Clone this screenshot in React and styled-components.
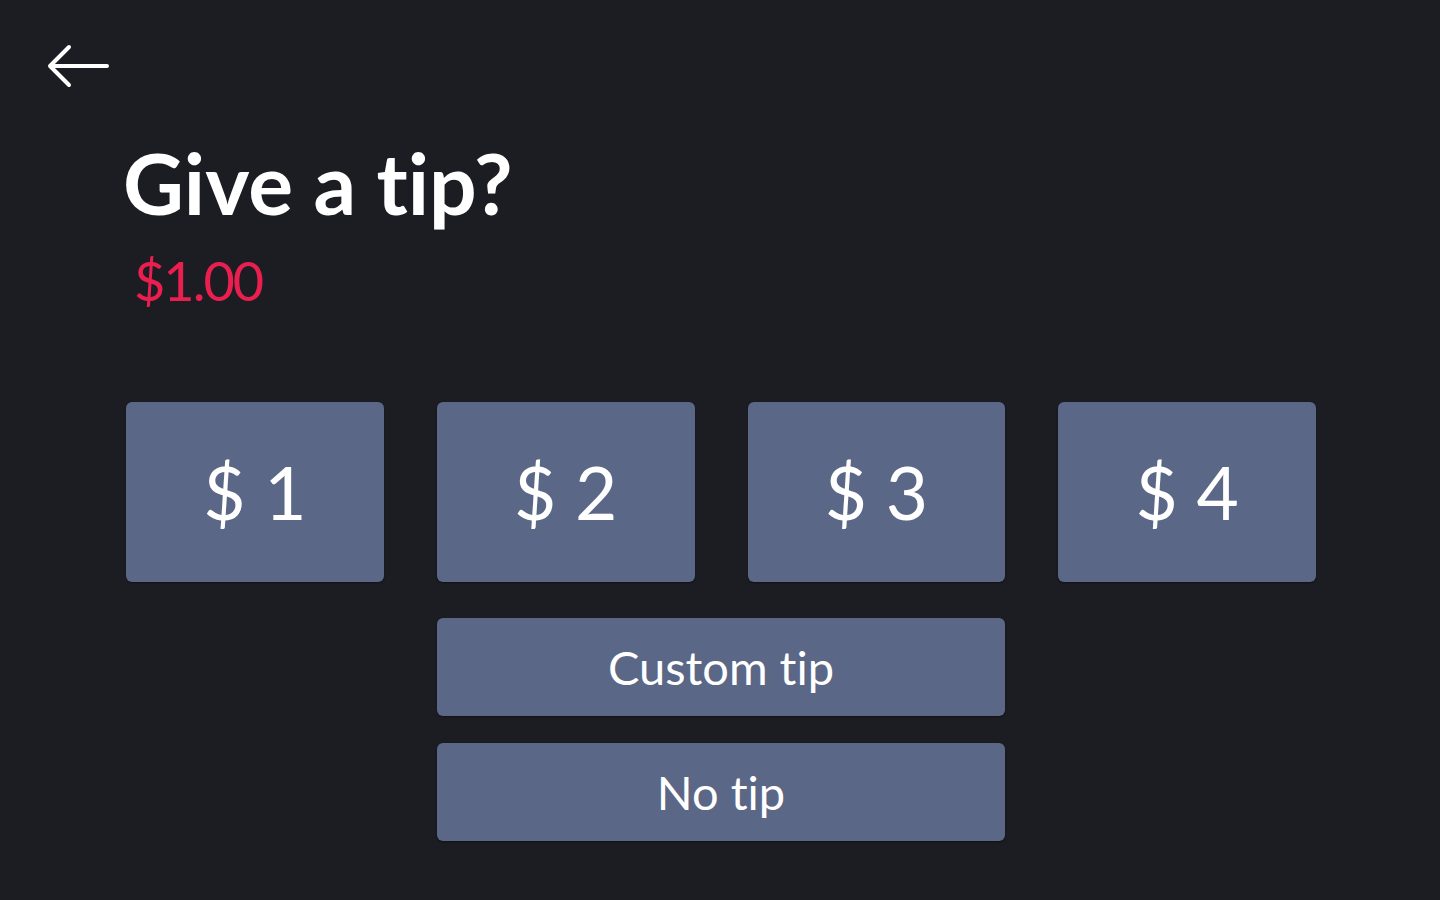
import React from "react";
import styled, { createGlobalStyle } from "styled-components";

const GlobalStyle = createGlobalStyle`
	html, body {
		margin: 0;
		padding: 0;
		background: #1c1d22;
	}
	body {
		font-family: "Lato", "Noto Sans", sans-serif;
		color: #fff;
		font-variant-ligatures: none;
	}
`;

const Page = styled.div`
	width: 1440px;
	height: 900px;
	box-sizing: border-box;
	padding: 44px 124px 0 126px;
	position: relative;
`;

const BackButton = styled.button`
	position: absolute;
	top: 43px;
	left: 46px;
	width: 64px;
	height: 46px;
	padding: 0;
	border: none;
	background: transparent;
	cursor: pointer;
	display: flex;
	align-items: center;
	justify-content: center;
`;

const Header = styled.div`
	padding-top: 91px;
	display: flex;
	flex-direction: column;
`;

const Title = styled.h1`
	margin: 0;
	margin-left: -3px;
	font-size: 84px;
	font-weight: 700;
	line-height: 96px;
	letter-spacing: 0;
`;

const Amount = styled.div`
	margin-left: 8px;
	margin-top: 14px;
	font-size: 54px;
	line-height: 72px;
	color: #ea1f50;
	letter-spacing: -2px;
`;

const Grid = styled.div`
	margin-top: 85px;
	display: grid;
	grid-template-columns: repeat(4, 1fr);
	column-gap: 53px;
	row-gap: 0;
`;

const TipButton = styled.button`
	height: ${(p) => p.$h}px;
	grid-column: ${(p) => p.$col || "auto"};
	margin-top: ${(p) => p.$mt || 0}px;
	border: none;
	border-radius: 6px;
	background: #5a6786;
	color: #fff;
	font-family: "Lato", "Noto Sans", sans-serif;
	font-variant-ligatures: none;
	font-size: ${(p) => p.$size}px;
	font-weight: 400;
	cursor: pointer;
	display: flex;
	align-items: center;
	justify-content: center;
	box-shadow: 0 1px 2px rgba(0, 0, 0, 0.4);
`;

const amounts = [1, 2, 3, 4];

const App = () => {
	return (
		<>
			<GlobalStyle />
			<Page>
				<BackButton aria-label="Back">
					<svg width="64" height="46" viewBox="0 0 64 46" fill="none">
						<path
							d="M61 23H4M23 4L4 23L23 42"
							stroke="#fff"
							strokeWidth="4"
							strokeLinecap="round"
							strokeLinejoin="round"
						/>
					</svg>
				</BackButton>
				<Header>
					<Title>Give a tip?</Title>
					<Amount>$1.00</Amount>
				</Header>
				<Grid>
					{amounts.map((a) => (
						<TipButton key={a} $h={180} $size={73}>
							$ {a}
						</TipButton>
					))}
					<TipButton $h={98} $size={47} $col="2 / 4" $mt={36}>
						Custom tip
					</TipButton>
					<TipButton $h={98} $size={47} $col="2 / 4" $mt={27}>
						No tip
					</TipButton>
				</Grid>
			</Page>
		</>
	);
};

export default App;
